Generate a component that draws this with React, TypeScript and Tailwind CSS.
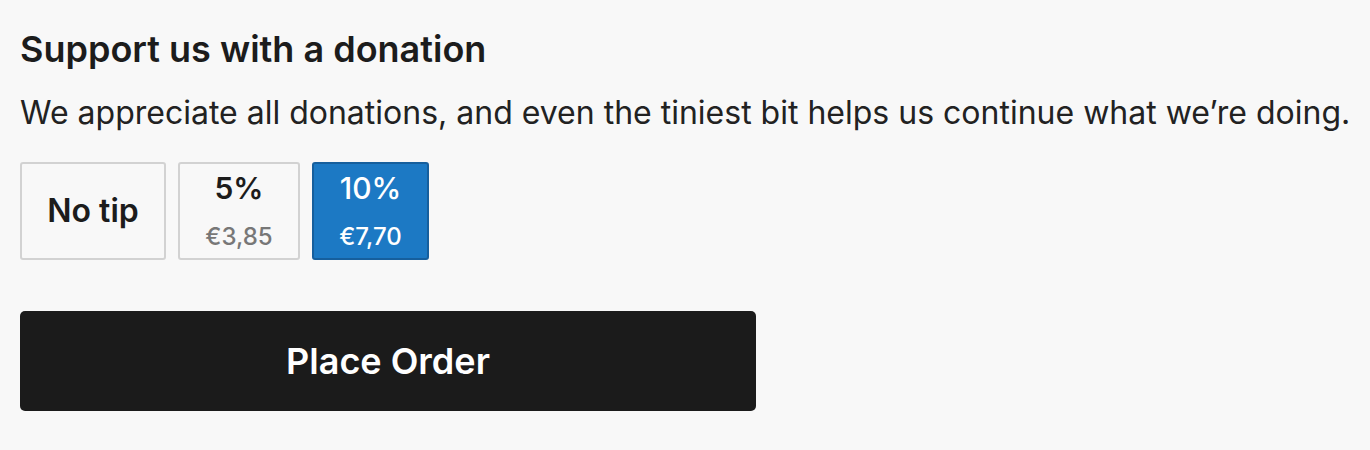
export default function App() {
  return (
    <div className="min-h-[450px] w-[1370px] bg-[#f8f8f8] px-5 pt-[27px] text-[#1c1c1c]" style={{ fontFamily: "Inter, 'Noto Sans', sans-serif" }}>
      <h2 className="text-[36px] font-semibold leading-[44px]">Support us with a donation</h2>
      <p className="mt-[22px] whitespace-nowrap text-[32px] leading-[40px] text-[#222]">We appreciate all donations, and even the tiniest bit helps us continue what we’re doing.</p>
      <div className="mt-[29px] flex gap-3">
        <button className="flex h-[98px] w-[146px] items-center justify-center rounded-[3px] border-2 border-[#d2d2d2] bg-[#f8f8f8] text-[32px] font-semibold text-[#1c1c1c]">No tip</button>
        <button className="flex h-[98px] w-[122px] flex-col items-center justify-center rounded-[3px] border-2 border-[#d2d2d2] bg-[#f8f8f8]">
          <span className="text-[30px] font-semibold leading-[36px] text-[#1c1c1c]">5%</span>
          <span className="mt-[16px] text-[24px] font-medium leading-[30px] text-[#777]">€3,85</span>
        </button>
        <button className="flex h-[98px] w-[117px] flex-col items-center justify-center rounded-[3px] border-2 border-[#165f9d] bg-[#1c79c4]">
          <span className="text-[30px] font-medium leading-[36px] text-white">10%</span>
          <span className="mt-[16px] text-[24px] font-medium leading-[30px] text-white">€7,70</span>
        </button>
      </div>
      <button className="mt-[51px] flex h-[100px] w-[736px] items-center justify-center rounded-[5px] bg-[#1b1b1b] text-[36px] font-semibold text-white">Place Order</button>
    </div>
  );
}
